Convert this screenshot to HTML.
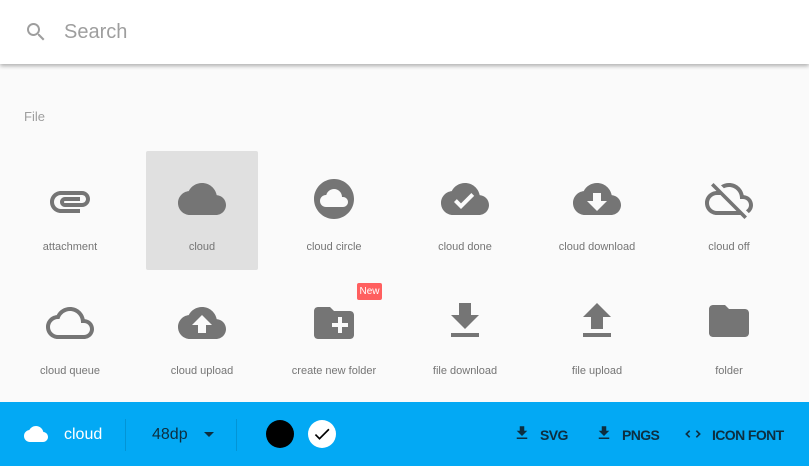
<!DOCTYPE html>
<html><head><meta charset="utf-8"><style>
*{margin:0;padding:0;box-sizing:border-box}
body{width:809px;height:466px;overflow:hidden;background:#fafafa;font-family:"Liberation Sans",sans-serif;position:relative}
.hdr{position:absolute;left:0;top:0;width:809px;height:64px;background:#fff;box-shadow:0 2px 4px rgba(0,0,0,.3)}
.a{position:absolute}
.ic{position:absolute;width:48px;height:48px;fill:#757575}
.lb{position:absolute;width:140px;text-align:center;font-size:11px;color:#757575}
.bar{position:absolute;left:0;top:402px;width:809px;height:64px;background:#03a9f4}
.bt{position:absolute;font-size:14px;font-weight:bold;color:#0d2e3f;top:25px;letter-spacing:-0.6px}
</style></head><body>
<div class="hdr">
<svg class="a" style="left:24px;top:20px" width="24" height="24" viewBox="0 0 24 24" fill="#9e9e9e"><path d="M15.5 14h-.79l-.28-.27C15.41 12.59 16 11.11 16 9.5 16 5.91 13.09 3 9.5 3S3 5.910 3 9.5 5.91 16 9.5 16c1.61 0 3.09-.59 4.23-1.57l.27.28v.79l5 4.99L20.49 19l-4.99-5zm-6 0C7.01 14 5 11.99 5 9.5S7.01 5 9.5 5 14 7.01 14 9.5 11.99 14 9.5 14z"/></svg>
<div class="a" style="left:64px;top:21px;font-size:20px;color:#9e9e9e">Search</div>
</div>
<div class="a" style="left:24px;top:109px;font-size:13px;color:#9e9e9e">File</div>
<div class="a" style="left:146px;top:151px;width:112px;height:119px;background:#e0e0e0;border-radius:2px"></div>

<svg class="ic" style="left:46px;top:177px" viewBox="0 0 24 24"><path d="M2 12.5C2 9.46 4.46 7 7.5 7H18c2.21 0 4 1.79 4 4s-1.79 4-4 4H9.5C8.12 15 7 13.88 7 12.5S8.12 10 9.5 10H17v2H9.41c-.55 0-.55 1 0 1H18c1.1 0 2-.9 2-2s-.9-2-2-2H7.5C5.57 9 4 10.57 4 12.5S5.57 16 7.5 16H17v2H7.5C4.46 18 2 15.54 2 12.5z"/></svg>
<svg class="ic" style="left:178px;top:175px" viewBox="0 0 24 24"><path d="M19.35 10.04C18.67 6.59 15.64 4 12 4 9.11 4 6.6 5.64 5.35 8.04 2.34 8.36 0 10.91 0 14c0 3.31 2.69 6 6 6h13c2.76 0 5-2.24 5-5 0-2.64-2.05-4.78-4.65-4.96z"/></svg>
<svg class="ic" style="left:310px;top:175px" viewBox="0 0 24 24"><path d="M12 2C6.48 2 2 6.48 2 12s4.48 10 10 10 10-4.48 10-10S17.52 2 12 2zm4.5 14H8c-1.66 0-3-1.34-3-3s1.34-3 3-3l.14.01C8.58 8.28 10.13 7 12 7c2.21 0 4 1.79 4 4h.5c1.38 0 2.5 1.12 2.5 2.5S17.88 16 16.5 16z"/></svg>
<svg class="ic" style="left:441px;top:175px" viewBox="0 0 24 24"><path d="M19.35 10.04C18.67 6.59 15.64 4 12 4 9.11 4 6.6 5.64 5.35 8.04 2.34 8.36 0 10.91 0 14c0 3.31 2.69 6 6 6h13c2.76 0 5-2.24 5-5 0-2.64-2.05-4.78-4.65-4.96zM10 17l-3.5-3.5 1.41-1.41L10 14.17 15.18 9l1.41 1.41L10 17z"/></svg>
<svg class="ic" style="left:573px;top:175px" viewBox="0 0 24 24"><path d="M19.35 10.04C18.67 6.59 15.64 4 12 4 9.11 4 6.6 5.64 5.35 8.04 2.34 8.36 0 10.91 0 14c0 3.31 2.69 6 6 6h13c2.76 0 5-2.24 5-5 0-2.64-2.05-4.78-4.65-4.96zM17 13l-5 5-5-5h3V9h4v4h3z"/></svg>
<svg class="ic" style="left:705px;top:175px" viewBox="0 0 24 24"><path d="M19.35 10.04C18.67 6.59 15.64 4 12 4c-1.48 0-2.85.43-4.01 1.17l1.46 1.46C10.21 6.23 11.08 6 12 6c3.04 0 5.5 2.46 5.5 5.5v.5H19c1.66 0 3 1.34 3 3 0 1.13-.64 2.11-1.56 2.62l1.45 1.45C23.16 18.16 24 16.68 24 15c0-2.64-2.05-4.78-4.65-4.96zM3 5.27l2.75 2.74C2.56 8.15 0 10.77 0 14c0 3.31 2.69 6 6 6h11.73l2 2L21 20.73 4.27 4 3 5.27zM7.73 10l8 8H6c-2.21 0-4-1.79-4-4s1.79-4 4-4h1.73z"/></svg>

<div class="lb" style="left:0;top:241px">attachment</div>
<div class="lb" style="left:132px;top:241px">cloud</div>
<div class="lb" style="left:264px;top:241px">cloud circle</div>
<div class="lb" style="left:395px;top:241px">cloud done</div>
<div class="lb" style="left:527px;top:241px">cloud download</div>
<div class="lb" style="left:659px;top:241px">cloud off</div>

<svg class="ic" style="left:46px;top:299px" viewBox="0 0 24 24"><path d="M19.35 10.04C18.67 6.59 15.64 4 12 4 9.11 4 6.6 5.64 5.35 8.04 2.34 8.36 0 10.91 0 14c0 3.31 2.69 6 6 6h13c2.76 0 5-2.24 5-5 0-2.64-2.05-4.78-4.65-4.96zM19 18H6c-2.21 0-4-1.79-4-4s1.79-4 4-4h.71C7.37 7.69 9.48 6 12 6c3.04 0 5.5 2.46 5.5 5.5v.5H19c1.66 0 3 1.34 3 3s-1.34 3-3 3z"/></svg>
<svg class="ic" style="left:178px;top:299px" viewBox="0 0 24 24"><path d="M19.35 10.04C18.67 6.59 15.64 4 12 4 9.11 4 6.6 5.64 5.35 8.04 2.34 8.36 0 10.91 0 14c0 3.31 2.69 6 6 6h13c2.76 0 5-2.24 5-5 0-2.64-2.05-4.78-4.65-4.96zM14 13v4h-4v-4H7l5-5 5 5h-3z"/></svg>
<svg class="ic" style="left:310px;top:299px" viewBox="0 0 24 24"><path d="M20 6h-8l-2-2H4c-1.11 0-1.99.89-1.99 2L2 18c0 1.11.89 2 2 2h16c1.11 0 2-.89 2-2V8c0-1.11-.89-2-2-2zm-1 8h-3v3h-2v-3h-3v-2h3V9h2v3h3v2z"/></svg>
<div class="a" style="left:357px;top:283px;width:25px;height:17px;background:#ff5f5f;border-radius:2px;color:#fff;font-size:10px;text-align:center;line-height:17px">New</div>
<svg class="ic" style="left:441px;top:297px" viewBox="0 0 24 24"><path d="M19 9h-4V3H9v6H5l7 7 7-7zM5 18v2h14v-2H5z"/></svg>
<svg class="ic" style="left:573px;top:297px" viewBox="0 0 24 24"><path d="M9 16h6v-6h4l-7-7-7 7h4zm-4 2h14v2H5z"/></svg>
<svg class="ic" style="left:705px;top:297px" viewBox="0 0 24 24"><path d="M10 4H4c-1.1 0-1.99.9-1.990 2L2 18c0 1.1.9 2 2 2h16c1.1 0 2-.9 2-2V8c0-1.1-.9-2-2-2h-8l-2-2z"/></svg>

<div class="lb" style="left:0;top:365px">cloud queue</div>
<div class="lb" style="left:132px;top:365px">cloud upload</div>
<div class="lb" style="left:264px;top:365px">create new folder</div>
<div class="lb" style="left:395px;top:365px">file download</div>
<div class="lb" style="left:527px;top:365px">file upload</div>
<div class="lb" style="left:659px;top:365px">folder</div>

<div class="bar">
<svg class="a" style="left:24px;top:20px" width="24" height="24" viewBox="0 0 24 24" fill="#fff"><path d="M19.35 10.04C18.67 6.59 15.64 4 12 4 9.11 4 6.6 5.64 5.35 8.04 2.34 8.36 0 10.91 0 14c0 3.31 2.69 6 6 6h13c2.76 0 5-2.24 5-5 0-2.64-2.05-4.78-4.65-4.96z"/></svg>
<div class="a" style="left:64px;top:24px;font-size:16px;color:#fff">cloud</div>
<div class="a" style="left:125px;top:17px;width:1px;height:32px;background:rgba(0,0,0,.12)"></div>
<div class="a" style="left:152px;top:24px;font-size:16px;color:#0d2e3f">48dp</div>
<div class="a" style="left:204px;top:30px;width:0;height:0;border-left:5px solid transparent;border-right:5px solid transparent;border-top:5px solid #0d2e3f"></div>
<div class="a" style="left:236px;top:17px;width:1px;height:32px;background:rgba(0,0,0,.12)"></div>
<div class="a" style="left:266px;top:18px;width:28px;height:28px;border-radius:50%;background:#000"></div>
<div class="a" style="left:308px;top:18px;width:28px;height:28px;border-radius:50%;background:#fff"></div>
<svg class="a" style="left:312px;top:22px" width="20" height="20" viewBox="0 0 24 24"><path d="M9 16.17L4.83 12l-1.42 1.41L9 19 21 7l-1.41-1.41z"/></svg>
<svg class="a" style="left:513px;top:22px" width="18" height="18" viewBox="0 0 24 24" fill="#0d2e3f"><path d="M19 9h-4V3H9v6H5l7 7 7-7zM5 18v2h14v-2H5z"/></svg>
<div class="bt" style="left:540px">SVG</div>
<svg class="a" style="left:595px;top:22px" width="18" height="18" viewBox="0 0 24 24" fill="#0d2e3f"><path d="M19 9h-4V3H9v6H5l7 7 7-7zM5 18v2h14v-2H5z"/></svg>
<div class="bt" style="left:622px">PNGS</div>
<svg class="a" style="left:682px;top:22px" width="22" height="20" viewBox="0 0 24 24" fill="none" stroke="#0d2e3f" stroke-width="2"><path d="M8 8l-4 4 4 4M16 8l4 4-4 4"/></svg>
<div class="bt" style="left:712px">ICON FONT</div>
</div>
</body></html>
